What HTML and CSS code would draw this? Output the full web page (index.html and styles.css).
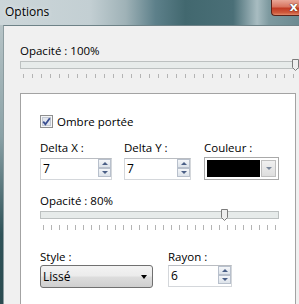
FILE: index.html
```html
<!DOCTYPE html>
<html>
<head>
<meta charset="utf-8">
<link rel="stylesheet" href="styles.css">
</head>
<body>
<div class="window">
  <div class="titlebar">
    <span class="title">Options</span>
    <div class="close"><span class="x">x</span></div>
  </div>
  <div class="frame">
    <div class="edge"></div>
    <div class="client">
      <div class="label">Opacité : 100%</div>
      <div class="slider slider-wide">
        <div class="track"></div>
        <svg class="thumb" style="left:272px" width="7" height="12" viewBox="0 0 7 12"><path d="M0.5,0.5 H6.5 V8.5 L3.5,11.5 L0.5,8.5 Z" fill="#eeeeee" stroke="#7c7c7c"/></svg>
        <div class="ticks"></div>
      </div>
      <div class="panel">
        <div class="check">
          <span class="box"><svg width="13" height="13" viewBox="0 0 13 13"><rect x="0.5" y="0.5" width="12" height="12" fill="#f4f5f7" stroke="#8e8f8f"/><rect x="2.5" y="2.5" width="8" height="8" fill="#e2e6ee" stroke="#c3c9d4"/><path d="M3.2,6.6 L5.4,9.2 L9.8,3.2" fill="none" stroke="#3a4f91" stroke-width="1.8"/></svg></span>
          <span>Ombre portée</span>
        </div>
        <div class="row row-fields">
          <div class="field f-dx">
            <div class="label">Delta X :</div>
            <div class="spin"><span class="val">7</span><div class="btns"><span class="sb up"></span><span class="sb down"></span></div></div>
          </div>
          <div class="field f-dy">
            <div class="label">Delta Y :</div>
            <div class="spin"><span class="val">7</span><div class="btns"><span class="sb up"></span><span class="sb down"></span></div></div>
          </div>
          <div class="field f-col">
            <div class="label">Couleur :</div>
            <div class="colorpick"><span class="swatch"></span><span class="cbtn"><span class="tri-s"></span></span></div>
          </div>
        </div>
        <div class="label label-op2">Opacité : 80%</div>
        <div class="slider slider-small">
          <div class="track"></div>
          <svg class="thumb" style="left:181px" width="7" height="12" viewBox="0 0 7 12"><path d="M0.5,0.5 H6.5 V8.5 L3.5,11.5 L0.5,8.5 Z" fill="#eeeeee" stroke="#7c7c7c"/></svg>
          <div class="ticks"></div>
        </div>
        <div class="row row-style">
          <div class="field f-style">
            <div class="label">Style :</div>
            <div class="combo"><span class="val">Lissé</span><span class="tri"></span></div>
          </div>
          <div class="field f-ray">
            <div class="label">Rayon :</div>
            <div class="spin"><span class="val">6</span><div class="btns"><span class="sb up"></span><span class="sb down"></span></div></div>
          </div>
        </div>
      </div>
    </div>
  </div>
</div>
</body>
</html>
```

FILE: styles.css
```css
html, body {
  margin: 0;
  padding: 0;
}
body {
  width: 299px;
  height: 304px;
  overflow: hidden;
  font-family: "Open Sans", "Noto Sans", sans-serif;
  font-size: 11.5px;
  line-height: 15px;
  color: #000;
}
.window {
  width: 299px;
  height: 304px;
  overflow: hidden;
  display: flex;
  flex-direction: column;
}
.titlebar {
  height: 25px;
  display: flex;
  align-items: flex-start;
  background: linear-gradient(to right, #ccd6d9 0%, #c3cfd3 30%, #9fb2b7 42%, #5d808a 52%, #42686f 62%, #4a6f77 78%, #a8bcc1 86%, #7d999f 90%, #6c8a91 100%);
}
.title {
  margin-left: 5px;
  margin-top: 4px;
  font-size: 12px;
  text-shadow: 0 0 4px rgba(255,255,255,0.7);
}
.close {
  margin-left: auto;
  width: 28px;
  height: 16px;
  box-sizing: border-box;
  border: 1px solid #5b2219;
  border-top: none;
  border-right: none;
  border-radius: 0 0 0 4px;
  background: linear-gradient(#e9a798 0%, #d8745f 45%, #c13b24 55%, #cf5a3d 85%, #e08a6b 100%);
  display: flex;
  justify-content: flex-end;
  align-items: center;
}
.x {
  color: #fff;
  font-family: "DejaVu Sans", sans-serif;
  font-weight: bold;
  font-size: 13px;
  line-height: 13px;
  margin-top: -2px;
  margin-right: 1px;
  text-shadow: 0 0 1px #3a1a14, 0 0 1px #3a1a14;
}
.frame {
  flex: 1;
  display: flex;
}
.edge {
  width: 3px;
  background: linear-gradient(#b7c4c7 0%, #8aa1a6 40%, #2f5258 75%, #2b4b50 100%);
}
.client {
  flex: 1;
  min-width: 0;
  background: #f0f0f0;
  border-left: 1px solid #8c9ca0;
  border-top: 1px solid #6e8287;
  padding: 17px 0 0 16px;
  display: flex;
  flex-direction: column;
}
.label {
  height: 15px;
  white-space: nowrap;
}
.slider {
  position: relative;
  margin-top: 3px;
}
.slider-wide {
  width: 279px;
}
.slider-small {
  width: 239px;
}
.track {
  height: 8px;
  box-sizing: border-box;
  border: 1px solid #bcc0c0;
  background: #e7ebea;
}
.thumb {
  position: absolute;
  top: -2px;
}
.ticks {
  margin-top: 5px;
  margin-left: 3px;
  height: 4px;
  background: repeating-linear-gradient(to right, #b4b4b4 0 1px, transparent 1px 9px);
}
.slider-small .ticks {
  margin-top: 6px;
  height: 5px;
  background: repeating-linear-gradient(to right, #b4b4b4 0 1px, transparent 1px 8px);
}
.panel {
  margin-top: 15px;
  width: 276px;
  flex: 1;
  box-sizing: border-box;
  background: #fff;
  border: 1px solid #a3a3a3;
  border-bottom: none;
  padding: 20px 0 0 19px;
  display: flex;
  flex-direction: column;
}
.check {
  display: flex;
  align-items: center;
  height: 15px;
}
.box {
  width: 13px;
  height: 13px;
  margin-right: 4px;
  display: flex;
}
.row {
  display: flex;
}
.row-fields {
  margin-top: 11px;
}
.field {
  display: flex;
  flex-direction: column;
}
.f-dx { width: 72px; margin-right: 12px; }
.f-dy { width: 67px; margin-right: 13px; }
.f-col { width: 75px; }
.spin {
  margin-top: 3px;
  height: 22px;
  box-sizing: border-box;
  border: 1px solid #d4d7db;
  border-top-color: #b9bcc1;
  background: #fff;
  display: flex;
}
.spin .val {
  flex: 1;
  padding-left: 2px;
  padding-top: 2px;
  font-size: 12px;
}
.btns {
  display: flex;
  flex-direction: column;
}
.sb {
  width: 13px;
  height: 9px;
  box-sizing: border-box;
  border: 1px solid #b8c0cc;
  background: linear-gradient(#f4f6f9, #dde3ea);
  display: flex;
  justify-content: center;
  align-items: center;
}
.sb::after {
  content: "";
  width: 0;
  height: 0;
  border-left: 3px solid transparent;
  border-right: 3px solid transparent;
}
.sb.up::after {
  border-bottom: 3px solid #4a5f86;
}
.sb.down::after {
  border-top: 3px solid #4a5f86;
}
.colorpick {
  margin-top: 2px;
  height: 23px;
  box-sizing: border-box;
  border: 1px solid #a9a9a9;
  padding: 2px;
  display: flex;
  gap: 1px;
  background: #fff;
}
.swatch {
  flex: 1;
  background: #000;
}
.cbtn {
  width: 15px;
  box-sizing: border-box;
  border: 1px solid #bfbfbf;
  background: linear-gradient(#f0f0f0, #dedede);
  display: flex;
  justify-content: center;
  align-items: center;
}
.tri-s {
  width: 0;
  height: 0;
  border-left: 3px solid transparent;
  border-right: 3px solid transparent;
  border-top: 3px solid #7a879b;
}
.label-op2 {
  margin-top: 13px;
}
.row-style {
  margin-top: 19px;
}
.f-style { width: 113px; margin-right: 15px; }
.f-ray { width: 64px; }
.combo {
  margin-top: 1px;
  height: 23px;
  box-sizing: border-box;
  border: 1px solid #707070;
  border-radius: 3px;
  background: linear-gradient(#f3f3f3 0%, #ebebeb 48%, #dddddd 52%, #cfcfcf 100%);
  display: flex;
  align-items: center;
  padding: 0 5px 0 2px;
}
.combo .val {
  flex: 1;
  font-size: 12px;
}
.tri {
  width: 0;
  height: 0;
  border-left: 3.5px solid transparent;
  border-right: 3.5px solid transparent;
  border-top: 4px solid #000;
}
.f-ray .spin {
  margin-top: 1px;
}
```
